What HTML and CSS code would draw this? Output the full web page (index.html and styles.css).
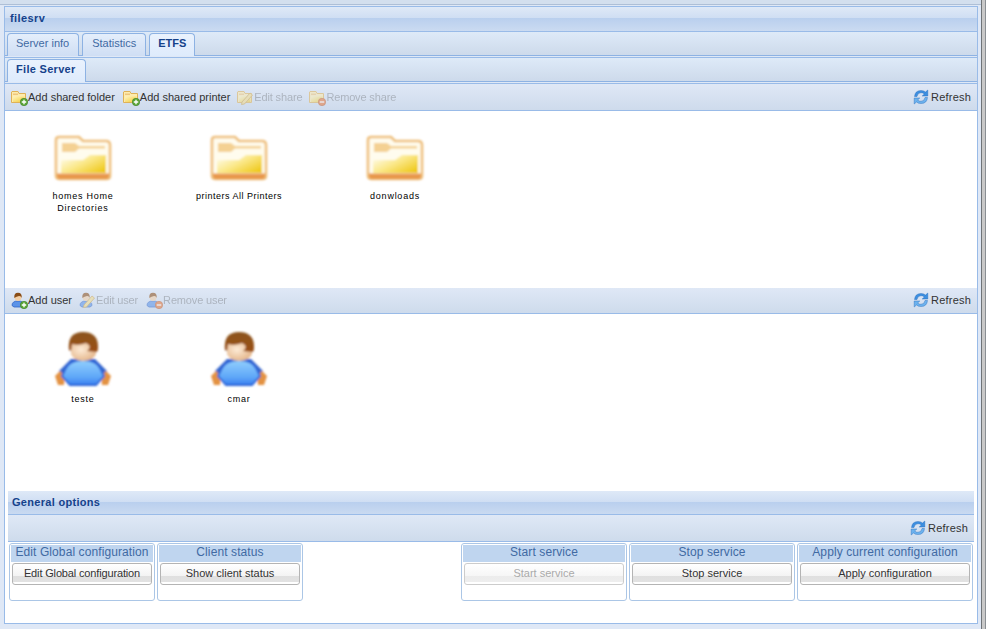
FILE: index.html
```html
<!DOCTYPE html>
<html lang="en">
<head>
<meta charset="utf-8">
<title>filesrv</title>
<link rel="stylesheet" href="styles.css">
</head>
<body>
<svg class="defs" width="0" height="0" aria-hidden="true">
  <defs>
    <linearGradient id="gFold" x1="0" y1="0.1" x2="1" y2="0.9"><stop offset="0" stop-color="#fffdf0"/><stop offset="0.45" stop-color="#fbe98e"/><stop offset="1" stop-color="#eec714"/></linearGradient>
    <linearGradient id="gFoldSm" x1="0" y1="0" x2="1" y2="1"><stop offset="0" stop-color="#fff4c0"/><stop offset="1" stop-color="#f2cb35"/></linearGradient>
    <linearGradient id="gBody" x1="0" y1="0" x2="0" y2="1"><stop offset="0" stop-color="#93d0fd"/><stop offset="0.7" stop-color="#5da6f8"/><stop offset="1" stop-color="#3a7ff0"/></linearGradient>
    <linearGradient id="gHair" x1="0" y1="0" x2="0" y2="1"><stop offset="0" stop-color="#8c5420"/><stop offset="1" stop-color="#9a4f10"/></linearGradient>
    <radialGradient id="gFace" cx="0.4" cy="0.4" r="0.7"><stop offset="0" stop-color="#fdebd6"/><stop offset="1" stop-color="#e2b184"/></radialGradient>
    <filter id="soft" x="-15%" y="-15%" width="130%" height="130%"><feGaussianBlur stdDeviation="1"/></filter>
    <symbol id="folderBig" viewBox="0 0 60 50" overflow="visible">
      <g filter="url(#soft)">
        <path d="M3 8Q3 5 6 5H26L30 9H53Q57 9 57 13V44Q57 47 53 47H7Q3 47 3 44Z" fill="#fffcee" stroke="#eec07e" stroke-width="2.600"/>
        <path d="M4 44V41.500H56V44Q56 47 53 47H7Q4 47 4 44Z" fill="#e8984c"/>
        <path d="M9 11H22L26 14H52V16.500H26L22 20H9Z" fill="#f4d193"/>
        <path d="M8 41V28H30L37 23H53V41Z" fill="url(#gFold)"/>
      </g>
    </symbol>
    <symbol id="userBig" viewBox="0 0 60 60" overflow="visible">
      <g filter="url(#soft)">
        <path d="M6 41L18 29H42L54 41L48 50H12Z" fill="#3666cc"/>
        <path d="M2 46L7 41L12 46L11 55L5 55Z" fill="#e39242"/>
        <path d="M58 46L53 41L48 46L49 55L55 55Z" fill="#e39242"/>
        <path d="M13 38Q17 30 30 30Q43 30 47 38L51 46L43 55H17L9 46Z" fill="url(#gBody)" stroke="#2a63d8" stroke-width="1.800"/>
        <path d="M18 12H43V24Q40 31 30 31Q21 31 18 24Z" fill="url(#gFace)"/>
        <path d="M16 20Q14 2 30 2Q46 2 45 19L44 22L34 21Q40 16 33 13Q26 16 19 14L18 21Z" fill="url(#gHair)"/>
      </g>
    </symbol>
    <symbol id="folderSm" viewBox="0 0 16 16">
      <path d="M.5 3V13.500H14.500V4.500H8L7 2.500H1Z" fill="#fdebae" stroke="#dfb257"/>
      <path d="M2 7.500H13.500V13H2Z" fill="url(#gFoldSm)"/>
      <path d="M2 4.500H7V6H2Z" fill="#efc67c"/>
    </symbol>
    <symbol id="userSm" viewBox="0 0 16 16">
      <path d="M1 13.500Q1 9 7 9T13 13.500L11 15H3Z" fill="#5b93e8" stroke="#2d62c4" stroke-width=".8"/>
      <circle cx="7" cy="5.500" r="3.400" fill="#f3cfa6"/>
      <path d="M3.300 6Q2.800 .8 7 .8T10.700 6Q10 3.800 8 4Q5.500 4.600 3.300 6Z" fill="#8a4d17"/>
    </symbol>
    <symbol id="plus" viewBox="0 0 8 8">
      <circle cx="4" cy="4" r="3.700" fill="#5da83a" stroke="#3c7d24" stroke-width=".6"/>
      <path d="M4 1.800V6.200M1.800 4H6.200" stroke="#fff" stroke-width="1.300"/>
    </symbol>
    <symbol id="minus" viewBox="0 0 8 8">
      <circle cx="4" cy="4" r="3.700" fill="#e8793a" stroke="#b9531f" stroke-width=".6"/>
      <path d="M1.800 4H6.200" stroke="#fff" stroke-width="1.300"/>
    </symbol>
    <symbol id="pencil" viewBox="0 0 16 16">
      <path d="M5 13L13 4L15.500 6L7.500 15L4.500 15.500Z" fill="#f5dd8c" stroke="#c9a04a" stroke-width=".8"/>
    </symbol>
    <symbol id="refresh" viewBox="0 0 16 16">
      <path d="M1.500 7.500Q2 1.500 8 1.500Q11 1.500 12.500 3L14.800 1V7H9.200L11.300 5Q10 3.600 8 3.700Q4.500 3.900 4 7.500Z" fill="#3d8fe0" stroke="#1f66b8" stroke-width=".4"/>
      <path d="M14.500 8.500Q14 14.500 8 14.500Q5 14.500 3.500 13L1.200 15V9H6.800L4.700 11Q6 12.400 8 12.300Q11.500 12.100 12 8.500Z" fill="#6cb2ee" stroke="#1f66b8" stroke-width=".4"/>
    </symbol>
  </defs>
</svg>

<div class="shell">
  <div class="view">
    <div class="topstrip"></div>
    <main class="panel">
      <header class="phead">filesrv</header>
      <nav class="tabs tabs-first">
        <span class="tab">Server info</span>
        <span class="tab">Statistics</span>
        <span class="tab tab-on">ETFS</span>
      </nav>
      <div class="tabgap"></div>
      <nav class="tabs tabs-second">
        <span class="tab tab-on tab-wide">File Server</span>
      </nav>
      <div class="tabgap"></div>

      <div class="toolbar toolbar-shares">
        <span class="tool"><span class="ico"><svg width="16" height="16"><use href="#folderSm"/></svg><svg class="badge" width="8" height="8"><use href="#plus"/></svg></span>Add shared folder</span>
        <span class="tool"><span class="ico"><svg width="16" height="16"><use href="#folderSm"/></svg><svg class="badge" width="8" height="8"><use href="#plus"/></svg></span>Add shared printer</span>
        <span class="tool off"><span class="ico"><svg width="16" height="16"><use href="#folderSm"/></svg><svg class="over" width="16" height="16"><use href="#pencil"/></svg></span>Edit share</span>
        <span class="tool off"><span class="ico"><svg width="16" height="16"><use href="#folderSm"/></svg><svg class="badge" width="8" height="8"><use href="#minus"/></svg></span>Remove share</span>
        <span class="tool tool-end"><span class="ico"><svg width="16" height="16"><use href="#refresh"/></svg></span>Refresh</span>
      </div>
      <section class="tiles tiles-shares">
        <div class="tile"><svg class="big" width="60" height="50"><use href="#folderBig"/></svg><span class="tlabel">homes Home Directories</span></div>
        <div class="tile"><svg class="big" width="60" height="50"><use href="#folderBig"/></svg><span class="tlabel tlabel-tight">printers All Printers</span></div>
        <div class="tile"><svg class="big" width="60" height="50"><use href="#folderBig"/></svg><span class="tlabel">donwloads</span></div>
      </section>

      <div class="toolbar toolbar-users">
        <span class="tool"><span class="ico"><svg width="16" height="16"><use href="#userSm"/></svg><svg class="badge" width="8" height="8"><use href="#plus"/></svg></span>Add user</span>
        <span class="tool off"><span class="ico"><svg width="16" height="16"><use href="#userSm"/></svg><svg class="over" width="16" height="16"><use href="#pencil"/></svg></span>Edit user</span>
        <span class="tool off"><span class="ico"><svg width="16" height="16"><use href="#userSm"/></svg><svg class="badge" width="8" height="8"><use href="#minus"/></svg></span>Remove user</span>
        <span class="tool tool-end"><span class="ico"><svg width="16" height="16"><use href="#refresh"/></svg></span>Refresh</span>
      </div>
      <section class="tiles tiles-users">
        <div class="tile"><svg class="big" width="60" height="60"><use href="#userBig"/></svg><span class="tlabel tlabel-user">teste</span></div>
        <div class="tile"><svg class="big" width="60" height="60"><use href="#userBig"/></svg><span class="tlabel tlabel-user">cmar</span></div>
      </section>

      <section class="general">
        <header class="phead phead-sub">General options</header>
        <div class="toolbar toolbar-general">
          <span class="tool tool-end"><span class="ico"><svg width="16" height="16"><use href="#refresh"/></svg></span>Refresh</span>
        </div>
        <div class="cards">
          <div class="card card-a"><h3>Edit Global configuration</h3><button class="btn btn-tight">Edit Global configuration</button></div>
          <div class="card card-a"><h3>Client status</h3><button class="btn">Show client status</button></div>
          <div class="cardgap"></div>
          <div class="card card-b"><h3>Start service</h3><button class="btn" disabled>Start service</button></div>
          <div class="card card-b"><h3>Stop service</h3><button class="btn">Stop service</button></div>
          <div class="card card-c"><h3>Apply current configuration</h3><button class="btn">Apply configuration</button></div>
        </div>
      </section>
    </main>
  </div>
  <div class="edge"></div>
</div>
</body>
</html>
```
FILE: styles.css
```css
* { box-sizing: border-box; }
html, body { margin: 0; height: 100%; }
body {
  background: #dfe8f6;
  font: 11px "Liberation Sans", Arial, sans-serif;
  color: #333;
  overflow: hidden;
}
.defs { display: block; height: 0; }
.shell { display: flex; height: 629px; }
.view { width: 981px; }
.edge {
  width: 5px;
  background: #c9c9c9;
  border-left: 1px solid #6f7478;
  border-right: 1px solid #8a8f94;
}
.topstrip {
  height: 5px;
  background: #d3dfee;
  border-bottom: 1px solid #aebfd6;
  margin-bottom: 1px;
}
.panel {
  margin: 0 3px 0 4px;
  height: 618px;
  border: 1px solid #99bbe8;
  background: #fff;
  display: flex;
  flex-direction: column;
}
.phead {
  height: 25px;
  padding: 5px 5px 0;
  font-weight: bold;
  color: #15428b;
  line-height: 13px;
  letter-spacing: .4px;
  background: linear-gradient(#dfe9f7 0, #cfdef3 11px, #b9cfee 11px, #cbdbf1 24px);
  border-bottom: 1px solid #99bbe8;
  flex: none;
}
.tabs {
  display: flex;
  gap: 2px;
  height: 24px;
  padding: 1px 2px 0;
  flex: none;
  background: linear-gradient(#deeaf8, #cddaeb);
  border-bottom: 1px solid #8db2e3;
}
.tabgap {
  height: 1px;
  background: #dfe8f6;
  border-bottom: 1px solid #99bbe8;
  box-sizing: content-box;
  flex: none;
}
.tab {
  height: 23px;
  padding: 0 9px 0 8px;
  margin-right: 1px;
  line-height: 18px;
  color: #416aa3;
  border: 1px solid #8db2e3;
  border-bottom: 0;
  border-radius: 4px 4px 0 0;
  background: linear-gradient(#e4eefb, #cfdef4);
}
.tab + .tab { padding-left: 9px; }
.tab.tab-on {
  color: #15428b;
  font-weight: bold;
  background: linear-gradient(#eaf2fd, #deebfc);
  height: 23px;
  padding: 0 8px;
  position: relative;
  margin-bottom: -1px;
}
.tab.tab-wide { padding-right: 9px; letter-spacing: .3px; }
.toolbar {
  height: 27px;
  flex: none;
  display: flex;
  align-items: center;
  padding: 0 6px;
  gap: 7px;
  background: linear-gradient(#dfe8f6, #cedbec);
  border-bottom: 1px solid #99bbe8;
}
.toolbar-shares .tool:first-child { margin-right: 1px; }
.toolbar-users { height: 26px; padding-bottom: 1px; }
.toolbar-users .off + .off { margin-left: 1px; }
.tool { display: flex; align-items: center; gap: 1px; }
.tool.off { color: #8a8f96; opacity: .55; letter-spacing: -.15px; }
.tool-end { margin-left: auto; letter-spacing: .2px; gap: 2px; }
.ico { position: relative; width: 16px; height: 16px; display: block; }
.ico svg { display: block; }
.badge { position: absolute; right: -1px; bottom: -1px; }
.over { position: absolute; left: 0; top: 0; }
.tiles { display: flex; background: #fff; flex: none; }
.tiles-shares { height: 177px; padding-top: 21px; }
.tiles-users { height: 177px; padding-top: 16px; }
.tile {
  width: 156px;
  display: flex;
  flex-direction: column;
  align-items: center;
  text-align: center;
}
.big { display: block; flex: none; overflow: visible; }
.tlabel {
  margin-top: 8px;
  width: 100px;
  font-size: 9px;
  line-height: 12px;
  letter-spacing: .75px;
  color: #000;
}
.tlabel-tight { letter-spacing: .5px; }
.tlabel-user { margin-top: 3px; }
.general {
  flex: 1;
  margin: 0 3px;
  display: flex;
  flex-direction: column;
  background: #fff;
}
.phead-sub { height: 24px; padding: 5px 4px 0; letter-spacing: .3px; }
.cards { display: flex; gap: 2px; padding: 1px 1px 0; }
.card {
  height: 58px;
  border: 1px solid #abc6e6;
  border-radius: 3px;
  background: #fff;
  padding: 1px 1px 0;
  flex: none;
}
.card-a { width: 146px; }
.card-b { width: 166px; }
.card-c { width: 176px; }
.cardgap { width: 154px; flex: none; }
.card h3 {
  margin: 0 0 1px;
  height: 17px;
  font-size: 12px;
  line-height: 14px;
  font-weight: normal;
  text-align: center;
  color: #416aa3;
  background: #bfd5ef;
  letter-spacing: .1px;
  white-space: nowrap;
}
.btn {
  display: block;
  width: 140px;
  margin: 0 auto;
  height: 22px;
  padding: 0 0 2px;
  font: 11px "Liberation Sans", Arial, sans-serif;
  color: #333;
  border: 1px solid #b4b4b4;
  border-radius: 3px;
  background: linear-gradient(#fff 0, #f3f3f3 12px, #dfdfdf 12px, #e2e2e2 18px, #fff 18px);
}
.btn-tight { letter-spacing: -.15px; }
.card-b .btn { width: 160px; }
.card-c .btn { width: 170px; }
.btn:disabled { color: #aaa; border-color: #ccc; background: linear-gradient(#fff 0, #f6f6f6 12px, #ececec 12px, #eee 18px, #fff 18px); }
```
